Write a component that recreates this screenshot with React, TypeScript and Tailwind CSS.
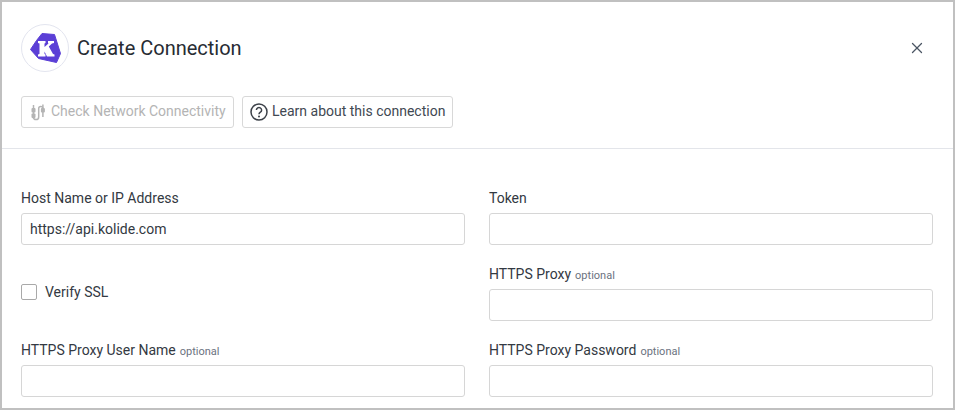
import React from "react";
import { X } from "lucide-react";

function Field({ label, optional, value }: { label: string; optional?: boolean; value?: string }) {
  return (
    <div className="flex h-[76px] flex-col">
      <label className="flex h-[20px] items-baseline gap-1 text-[14px] leading-[20px] text-[#333942]">
        {label}
        {optional && <span className="text-[11px] text-[#6b7280]">optional</span>}
      </label>
      <div className="mt-[5px] flex h-[32px] items-center rounded-[3px] border border-[#d6d6d6] bg-white px-2 text-[14px] text-[#333942]">
        {value}
      </div>
    </div>
  );
}

export default function App() {
  return (
    <div
      className="h-[410px] w-[955px] overflow-hidden border-2 border-[#c0c0c0] bg-white"
      style={{ fontFamily: "Roboto, sans-serif" }}
    >
      <div className="flex h-[147px] flex-col border-b border-[#e3e5ea] px-[19px] pt-[22px]">
        <div className="flex h-[48px] items-center">
          <div className="flex h-[48px] w-[48px] items-center justify-center rounded-full border border-[#e3e5ef] bg-white">
            <svg width="34" height="34" viewBox="0 0 34 34">
              <path d="M14 2.5 L26.5 3.5 L32.5 22.5 L28.5 31.5 L10.5 27.5 L2.5 18.5 L8.5 9.5 Z" fill="#5b3fd6" stroke="#5b3fd6" strokeWidth="1" strokeLinejoin="round" />
              <path
                d="M10 10 H17.5 V12 L16.5 12.4 V16 L20.5 12.4 L20 12 V10 H26 V12 L24 12.6 L20.8 15.6 L25 23 L26.5 23.5 V25.5 H19 L16.5 20.5 V23 L17.5 23.5 V25.5 H10 V23.5 L11.5 23 V12.4 L10 12 Z"
                fill="#fff"
              />
            </svg>
          </div>
          <h1 className="ml-2 text-[20px] font-normal leading-[28px] text-[#272c33]">Create Connection</h1>
          <X className="ml-auto mr-[8px] text-[#4b5563]" size={18} strokeWidth={1.75} />
        </div>
        <div className="mt-[24px] flex gap-2">
          <button className="flex h-[32px] w-[213px] items-center rounded-[3px] border border-[#d8d8d8] pb-[2px] pl-[8px] text-[14px] text-[#b4b4b4]">
            <svg width="18" height="18" viewBox="0 0 18 18" fill="none" stroke="#b4b4b4" strokeWidth="1.5" className="mr-[3px] mt-[2px] shrink-0">
              <path d="M3.5 2 V15.5" />
              <path d="M3.5 14 a2.6 2.6 0 0 0 5.2 0 V5.5 a2.1 2.1 0 0 1 4.2 0 V14" />
              <rect x="1.5" y="5" width="4" height="4.5" rx="1" fill="#b4b4b4" stroke="none" />
              <rect x="1.5" y="10.5" width="4" height="4.5" rx="1" fill="#b4b4b4" stroke="none" />
              <rect x="10.9" y="5" width="4" height="4.5" rx="1" fill="#b4b4b4" stroke="none" />
              <path d="M12.9 1.5 V5" />
            </svg>
            Check Network Connectivity
          </button>
          <button className="flex h-[32px] w-[211px] items-center rounded-[3px] border border-[#d8d8d8] pb-[2px] pl-[7px] text-[14px] text-[#414852]">
            <svg width="18" height="18" viewBox="0 0 18 18" fill="none" className="mr-[4px] mt-[2px] shrink-0">
              <circle cx="9" cy="9" r="8" stroke="#3c4149" strokeWidth="1.5" />
              <path d="M6.4 7 a2.6 2.5 0 1 1 4 2.1 C9.4 9.8 9 10.2 9 11.3" stroke="#3c4149" strokeWidth="1.5" />
              <circle cx="9" cy="13.4" r="1" fill="#3c4149" />
            </svg>
            Learn about this connection
          </button>
        </div>
      </div>
      <div className="grid grid-cols-[444px_444px] gap-x-6 px-[19px] pt-[39px]">
        <Field label="Host Name or IP Address" value="https://api.kolide.com" />
        <Field label="Token" />
        <div className="flex h-[76px] items-start pt-[20px]">
          <span className="h-[16px] w-[16px] rounded-[2px] border border-[#a9a9a9] bg-white" />
          <span className="ml-2 text-[14px] leading-[16px] text-[#333942]">Verify SSL</span>
        </div>
        <Field label="HTTPS Proxy" optional />
        <Field label="HTTPS Proxy User Name" optional />
        <Field label="HTTPS Proxy Password" optional />
      </div>
    </div>
  );
}
